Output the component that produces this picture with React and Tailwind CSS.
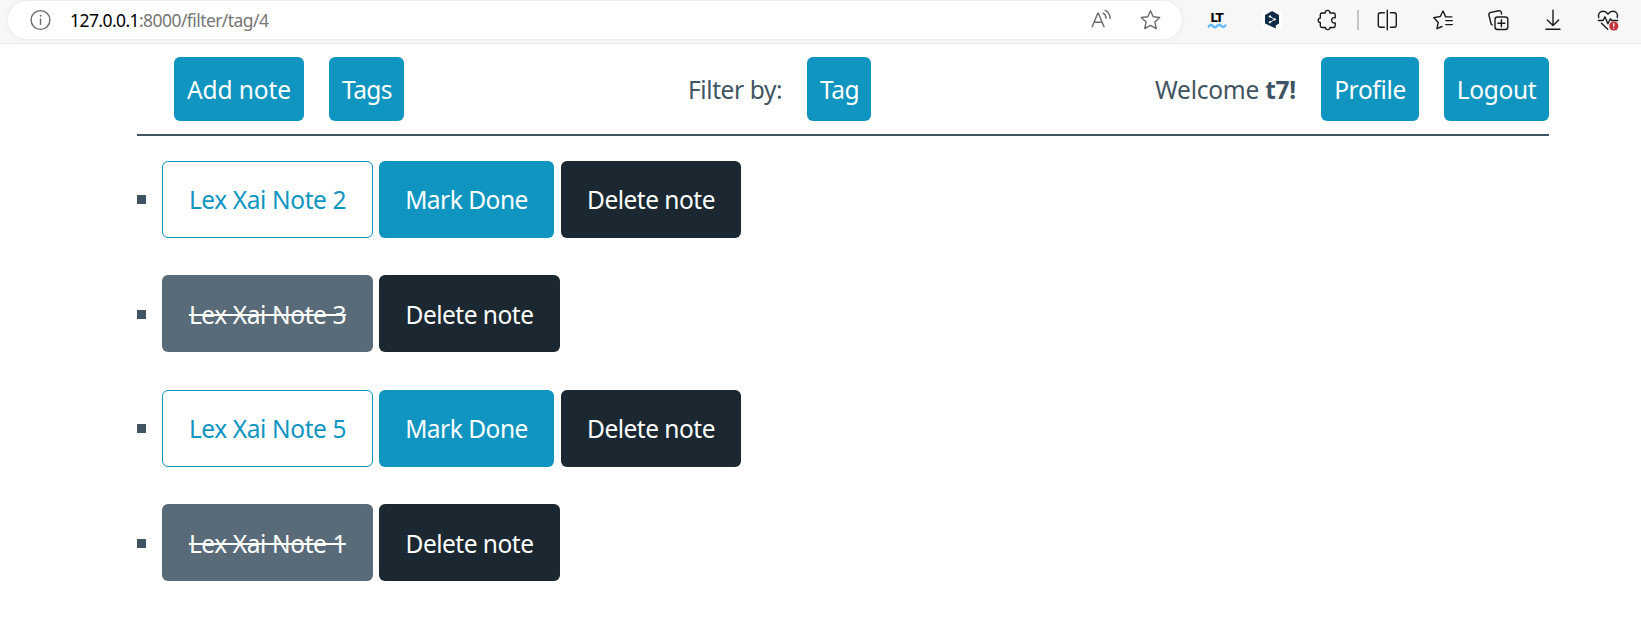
import React from "react";

const line = {
  fill: "none",
  stroke: "currentColor",
  strokeWidth: 1.4,
  strokeLinecap: "round",
  strokeLinejoin: "round",
};

function Icon({ className = "", children }) {
  return (
    <svg width="24" height="24" viewBox="0 0 24 24" className={`shrink-0 ${className}`} {...line}>
      {children}
    </svg>
  );
}

function AddressBar() {
  return (
    <div className="flex h-[38px] w-[1174px] items-center rounded-full bg-white pl-5 pr-[19px] text-[#6b6b6b] shadow-[0_0_4px_rgba(0,0,0,0.08)]">
      <Icon>
        <circle cx="12.5" cy="12" r="9.4" />
        <path d="M12.5 11v5.3" />
        <circle cx="12.5" cy="7.8" r="0.5" fill="currentColor" strokeWidth="0.8" />
      </Icon>
      <div className="ml-[18px] flex-1 whitespace-nowrap text-[17.5px] leading-6 tracking-[-0.57px] text-[#767676]">
        <span className="text-black">127.0.0.1</span>:8000/filter/tag/4
      </div>
      <Icon className="mr-[26px]">
        <path d="M3.2 18.8 8.8 5.2h.6l5.6 13.6M5.2 14.2h7.8" />
        <path d="M14 5.2c1.9 1 3 2.7 3 5M16.2 2.4c3.2 1.6 4.9 4.4 4.9 8.2" />
      </Icon>
      <Icon>
        <path d="M11.5 2.8 14.2 8.8 20.7 9.5 15.9 14 17.2 20.6 11.5 17.4 5.8 20.6 7.1 14 2.3 9.5 8.8 8.8Z" />
      </Icon>
    </div>
  );
}

function Toolbar() {
  return (
    <div className="flex h-[38px] items-center text-[#1a1a1a]">
      <svg width="24" height="24" viewBox="0 0 24 24" className="ml-[23px] shrink-0">
        <text x="11.7" y="14.3" textAnchor="middle" fontFamily="DejaVu Sans" fontWeight="700" fontSize="12" fill="#0a0a0a" letterSpacing="-0.5">
          LT
        </text>
        <path d="M3.8 18.5c1.4-2 2.8-2 4.2-.4s2.8 1.4 4.200-.2 2.800-1.600 4.200 0 2.600 1.300 4-.4" fill="none" stroke="#62bbff" strokeWidth="2.400" strokeLinecap="round" />
      </svg>
      <svg width="24" height="24" viewBox="0 0 24 24" className="ml-[31px] shrink-0">
        <rect x="2" y="2" width="20" height="20" rx="2" fill="#fff" />
        <path d="M12 3 19 7v8.500l-3.200 2v3L12 18.800 5 15.500V7Z" fill="#0f2b46" />
        <g fill="#fff" stroke="#fff" strokeWidth="0.9">
          <path d="M10 8.500 14.500 11.500 10 14.200" fill="none" />
          <circle cx="10" cy="8.500" r="0.8" />
          <circle cx="14.700" cy="11.400" r="0.8" />
          <circle cx="10" cy="14.200" r="0.8" />
        </g>
      </svg>
      <Icon className="ml-[31px]">
        <path d="M7 5h3.300c-.3-1.600.8-2.600 2.300-2.600s2.500 1 2.300 2.600H18.500q1.700 0 1.700 1.700V9.700c-2-.3-3.600.6-3.600 2.600s1.600 2.900 3.600 2.600v2.900q0 1.700-1.700 1.700H15c.2 1.300-.8 2.100-2.300 2.100s-2.500-.8-2.300-2.100H7q-1.700 0-1.700-1.700V14.500c-1.500 0-2.100-.9-2.100-2.200s.7-2.200 2.100-2.200V6.700Q5.300 5 7 5Z" />
      </Icon>
      <div className="ml-[18px] h-5 w-[1.5px] bg-[#c6c6c6]" />
      <Icon className="ml-[16.5px]">
        <path d="M12.300 2.300v19.400M9.300 4.700H5.500q-2.200 0-2.200 2.200v10.200q0 2.200 2.200 2.200h3.800M15.500 4.700h3.600q2.200 0 2.200 2.200v10.200q0 2.200-2.200 2.200h-3.600" />
      </Icon>
      <Icon className="ml-8">
        <path d="M20.800 8.900H14.700L12 3 9.300 8.500 2.700 9.600l4.500 4.800L6 20.700l5-2.200M14.800 12.600h6.500M14.800 16.600h6.500" />
      </Icon>
      <Icon className="ml-[31px]">
        <path d="M15.500 6V4.700q-.4-2.200-2.600-1.900L4.700 4.400Q2.500 5 2.900 7.100L5 15.500q.3 1.200 1.200 1.400" />
        <rect x="9" y="9" width="12.800" height="12.500" rx="2.500" />
        <path d="M15.400 11.700v7M11.900 15.200h7" />
      </Icon>
      <Icon className="ml-[31px]">
        <path d="M12 2.300v15M6.300 12l5.700 5.600 5.700-5.600M5 21.300h14" />
      </Icon>
      <Icon className="ml-[31px]">
        <path d="M2.700 9.500C1.700 5.500 4.200 3.300 7 3.300c2 0 3.600 1 5 2.700 1.400-1.700 3-2.700 5-2.700 2.800 0 5.300 2.200 4.300 6.200M2.300 12.500h4.800l1.800-3.700 3 7 2.500-5 1.200 1.700h6M5.500 15.300l6.200 6" />
        <circle cx="17.800" cy="18" r="4.600" fill="#c4323a" stroke="none" />
        <path d="M17.800 15.700v2.500M17.800 20.200v.1" stroke="#fff" strokeWidth="1.300" />
      </Icon>
    </div>
  );
}

function Button({ className = "", children }) {
  return (
    <button className={`flex shrink-0 items-center justify-center whitespace-nowrap rounded-[6px] text-white ${className}`}>
      {children}
    </button>
  );
}

const navButton = "h-16 bg-[#1095c1] pt-0.5";

function Nav() {
  return (
    <nav className="flex h-[92px] items-center border-b-2 border-[#415462] pb-px pl-[37px] tracking-[-0.35px]">
      <Button className={`${navButton} w-[130px] tracking-[-0.1px]`}>Add note</Button>
      <Button className={`${navButton} ml-[25px] w-[75px] pl-px tracking-[-0.6px]`}>Tags</Button>
      <span className="ml-[284px] w-[119px] whitespace-nowrap pt-0.5 tracking-[-0.4px]">Filter by:</span>
      <Button className={`${navButton} w-16 pl-px tracking-[-0.5px]`}>Tag</Button>
      <span className="flex-1 whitespace-nowrap pr-[25px] pt-0.5 text-right tracking-[-0.25px]">
        Welcome <strong className="font-bold">t7!</strong>
      </span>
      <Button className={`${navButton} w-[98px]`}>Profile</Button>
      <Button className={`${navButton} ml-[25px] w-[105px]`}>Logout</Button>
    </nav>
  );
}

const notes = [
  { title: "Lex Xai Note 2", done: false },
  { title: "Lex Xai Note 3", done: true },
  { title: "Lex Xai Note 5", done: false },
  { title: "Lex Xai Note 1", done: true },
];

function NoteRow({ title, done }) {
  return (
    <li className={`flex h-[77px] items-center tracking-[-0.4px] ${done ? "mb-[38px]" : "mb-[37px]"}`}>
      <span className={`mr-4 size-[9px] bg-[#415462] ${done ? "mt-0.5" : ""}`} />
      <Button
        className={
          done
            ? "h-full w-[211px] bg-[#596b78] pt-0.5"
            : "h-full w-[211px] border border-[#1095c1] bg-white text-[#1095c1]!"
        }
      >
        <span className={done ? "line-through decoration-2" : ""}>{title}</span>
      </Button>
      {!done && <Button className="ml-1.5 h-full w-[175px] bg-[#1095c1] tracking-[-0.5px]">Mark Done</Button>}
      <Button className={`h-full bg-[#1b2832] tracking-[-0.5px] ${done ? "ml-1.5 w-[181px] pt-0.5" : "ml-[7px] w-[180px]"}`}>
        Delete note
      </Button>
    </li>
  );
}

export default function App() {
  return (
    <div className="h-[633px] w-[1641px] overflow-hidden bg-white font-['Noto_Sans',sans-serif] text-[24.5px] leading-8 text-[#415462]">
      <header className="flex h-11 border-b border-[#e8e8e8] bg-[#f7f7f7] pl-2 pt-px">
        <AddressBar />
        <Toolbar />
      </header>
      <main className="ml-[137px] w-[1412px]">
        <Nav />
        <ul className="mt-[25px] flex flex-col">
          {notes.map((n) => (
            <NoteRow key={n.title} {...n} />
          ))}
        </ul>
      </main>
    </div>
  );
}
